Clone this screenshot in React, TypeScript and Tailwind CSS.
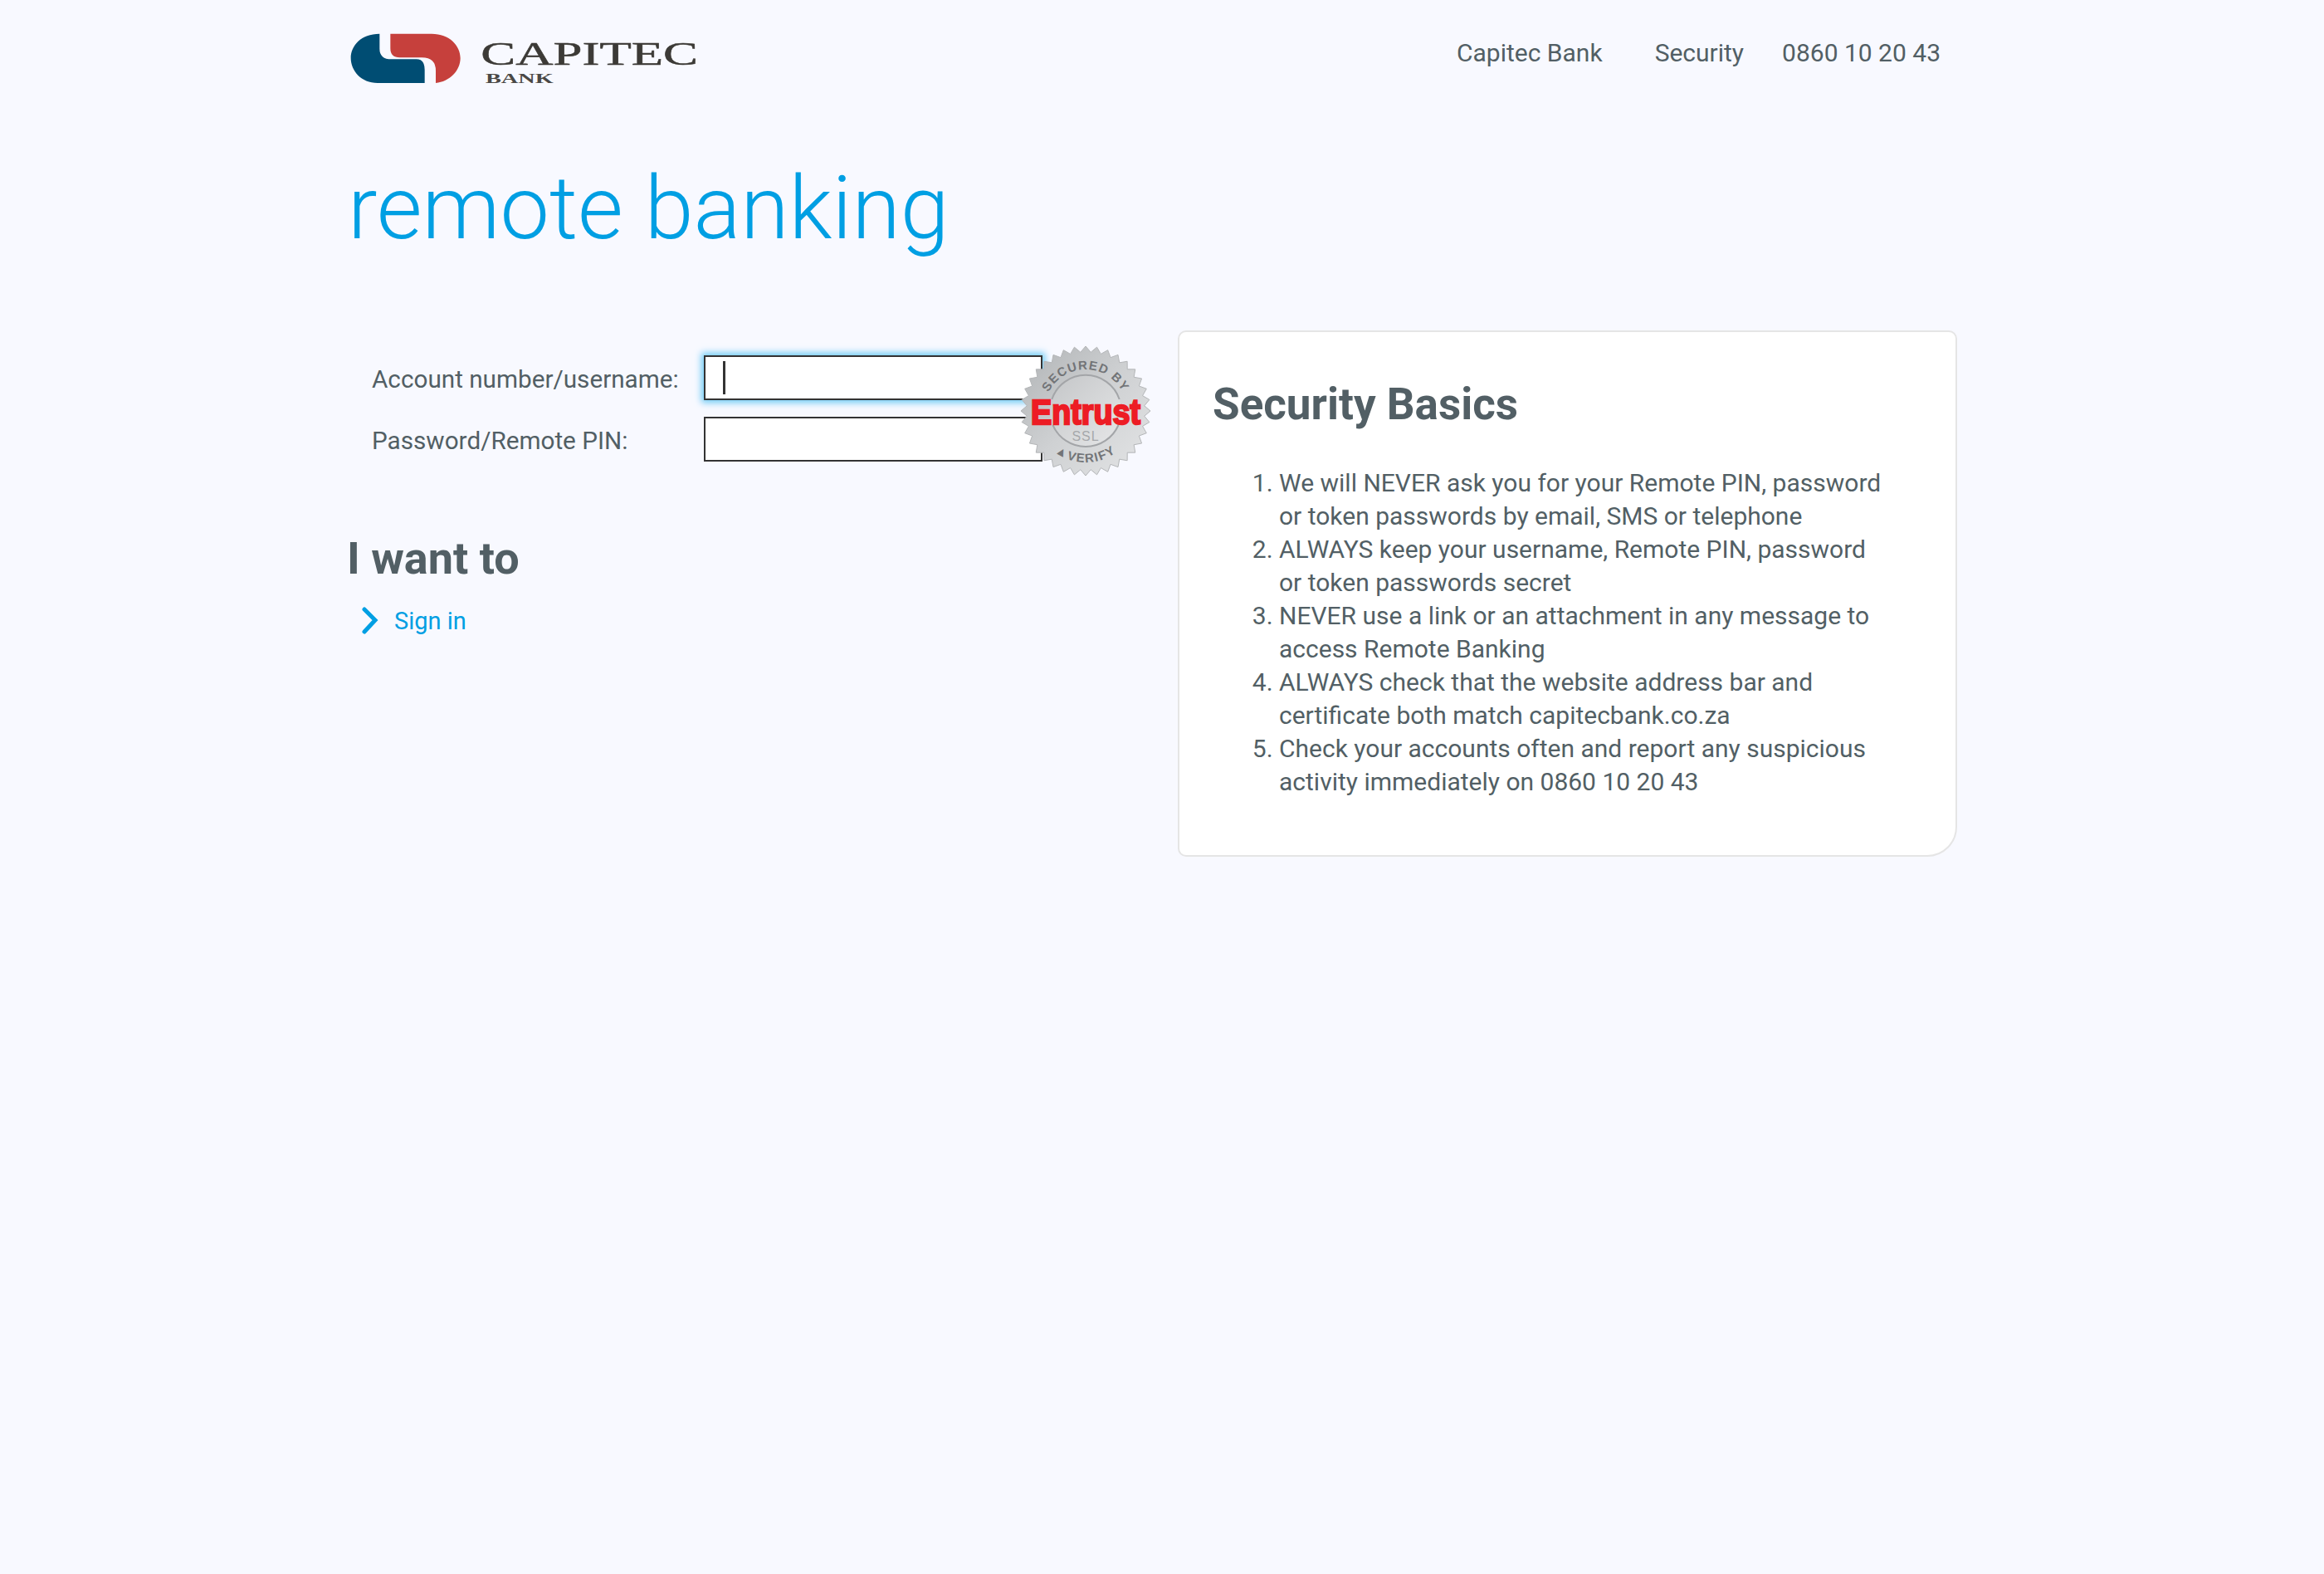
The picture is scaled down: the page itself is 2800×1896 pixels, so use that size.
import React from "react";

function sealPoints(cx: number, cy: number, rOut: number, rIn: number, n: number) {
  const pts: string[] = [];
  for (let i = 0; i < n * 2; i++) {
    const r = i % 2 === 0 ? rOut : rIn;
    const a = (Math.PI * i) / n;
    pts.push(`${(cx + r * Math.cos(a)).toFixed(2)},${(cy + r * Math.sin(a)).toFixed(2)}`);
  }
  return pts.join(" ");
}

function Seal() {
  return (
    <svg width="160" height="160" viewBox="0 0 160 160" className="absolute left-[780px] top-[-13px]">
      <defs>
        <linearGradient id="sg" x1="0" y1="0" x2="1" y2="1">
          <stop offset="0" stopColor="#b0b3b5" />
          <stop offset="0.5" stopColor="#cfd1d3" />
          <stop offset="1" stopColor="#e4e5e6" />
        </linearGradient>
        <linearGradient id="ig" x1="0" y1="0" x2="1" y2="1">
          <stop offset="0" stopColor="#c4c6c8" />
          <stop offset="1" stopColor="#e6e7e8" />
        </linearGradient>
        <path id="arcTop" d="M 30 80 A 50 50 0 0 1 130 80" fill="none" />
        <path id="arcBottom" d="M 18 80 A 62 62 0 0 0 142 80" fill="none" />
      </defs>
      <polygon points={sealPoints(80, 80, 78, 71, 36)} fill="url(#sg)" stroke="#b4b6b8" strokeWidth="1" />
      <circle cx="80" cy="80" r="43" fill="url(#ig)" />
      <path d="M39.3 66A43 43 0 0 1 120.7 66" fill="none" stroke="#a3a5a8" strokeWidth="2" />
      <path d="M40.5 97A43 43 0 0 0 119.5 97" fill="none" stroke="#a3a5a8" strokeWidth="2" />
      <text fontFamily="'Liberation Sans', sans-serif" fontSize="15" fontWeight="700" fill="#727477" letterSpacing="1.2">
        <textPath href="#arcTop" startOffset="50%" textAnchor="middle">SECURED BY</textPath>
      </text>
      <text fontFamily="'Liberation Sans', sans-serif" fontSize="15" fontWeight="700" fill="#727477" letterSpacing="1.5">
        <textPath href="#arcBottom" startOffset="50%" textAnchor="middle">▲VERIFY</textPath>
      </text>
      <text x="80" y="96" textAnchor="middle" fontFamily="'Liberation Sans', sans-serif" fontSize="42" fontWeight="700" fill="#ed1c24" stroke="#ed1c24" strokeWidth="2.4" textLength="132" lengthAdjust="spacingAndGlyphs">Entrust</text>
      <text x="80" y="116" textAnchor="middle" fontFamily="'Liberation Sans', sans-serif" fontSize="16" fill="#a6a8ab" letterSpacing="1">SSL</text>
    </svg>
  );
}

function Logo() {
  return (
    <svg width="480" height="110" viewBox="0 0 1440 330" className="block">
      <path d="M172 92V146Q172 184 215 184H305Q335 184 335 222V270H165C105 270 68 225 68 180C68 135 105 92 172 92Z" fill="#004d73" />
      <path d="M211 92H360C425 92 464 135 464 180C464 225 425 265 375 270V226Q375 178 325 178H245Q211 178 211 145Z" fill="#c6403c" />
      <text x="538" y="203" fontFamily="'Liberation Serif', serif" fontSize="120" fill="#3c3a36" stroke="#3c3a36" strokeWidth="1.5" textLength="785" lengthAdjust="spacingAndGlyphs">CAPITEC</text>
      <text x="555" y="270" fontFamily="'Liberation Serif', serif" fontSize="52" fontWeight="700" fill="#4a4845" textLength="245" lengthAdjust="spacingAndGlyphs">BANK</text>
    </svg>
  );
}

const items = [
  "We will NEVER ask you for your Remote PIN, password or token passwords by email, SMS or telephone",
  "ALWAYS keep your username, Remote PIN, password or token passwords secret",
  "NEVER use a link or an attachment in any message to access Remote Banking",
  "ALWAYS check that the website address bar and certificate both match capitecbank.co.za",
  "Check your accounts often and report any suspicious activity immediately on 0860 10 20 43",
];

export default function App() {
  return (
    <div className="min-h-[1896px] bg-[#f8f9ff] text-[#525f65] font-['Roboto',sans-serif]">
      <div className="mx-auto w-[1960px]">
        <header className="flex h-[120px] items-start justify-between">
          <div className="-ml-[20px] pt-[10px]">
            <Logo />
          </div>
          <nav className="flex items-center pt-[44px] pr-[42px] text-[30px] leading-[40px]">
            <a className="mr-[63px]">Capitec Bank</a>
            <a className="mr-[46px]">Security</a>
            <a>0860 10 20 43</a>
          </nav>
        </header>
        <h1 className="mt-[66px] -ml-[1px] text-[106px] font-light leading-[130px] text-[#009fe3]">remote banking</h1>
        <main className="mt-[82px] flex items-start">
          <section className="w-[999px]">
            <div className="relative mt-[30px] ml-[28px] flex w-[808px] flex-col gap-[20px]">
              <div className="flex items-center">
                <label className="w-[400px] pt-[5px] text-[29.7px]">Account number/username:</label>
                <div className="relative h-[54px] w-[408px] border-2 border-[#333333] bg-white shadow-[0_0_8px_3px_#6ccaf5]">
                  <span className="absolute left-[21px] top-[5px] h-[40px] w-[3px] bg-[#333333]" />
                </div>
              </div>
              <div className="flex items-center">
                <label className="w-[400px] pt-[5px] text-[29.7px]">Password/Remote PIN:</label>
                <div className="h-[54px] w-[408px] border-2 border-[#333333] bg-white" />
              </div>
              <Seal />
            </div>
            <h2 className="mt-[85px] -ml-[2px] text-[54px] font-bold leading-[64px]">I want to</h2>
            <a className="mt-[23px] flex items-center pl-[14px] text-[29px] leading-[40px] text-[#009fe3]">
              <svg width="24" height="34" viewBox="0 0 24 34" className="mr-[17px]">
                <path d="M5 3L18 16L5 30" fill="none" stroke="#009fe3" strokeWidth="5" strokeLinecap="round" strokeLinejoin="miter" />
              </svg>
              Sign in
            </a>
          </section>
          <section className="h-[634px] w-[939px] rounded-tl-[10px] rounded-tr-[10px] rounded-bl-[10px] rounded-br-[36px] border-2 border-[#e5e5e5] bg-white pl-[40px] pt-[50px]">
            <h2 className="text-[53px] font-bold leading-[74px]">Security Basics</h2>
            <ol className="mt-[38px] w-[813px] list-decimal pl-[80px] text-[30px] leading-[40px]">
              {items.map((t) => (
                <li key={t}>{t}</li>
              ))}
            </ol>
          </section>
        </main>
      </div>
    </div>
  );
}
